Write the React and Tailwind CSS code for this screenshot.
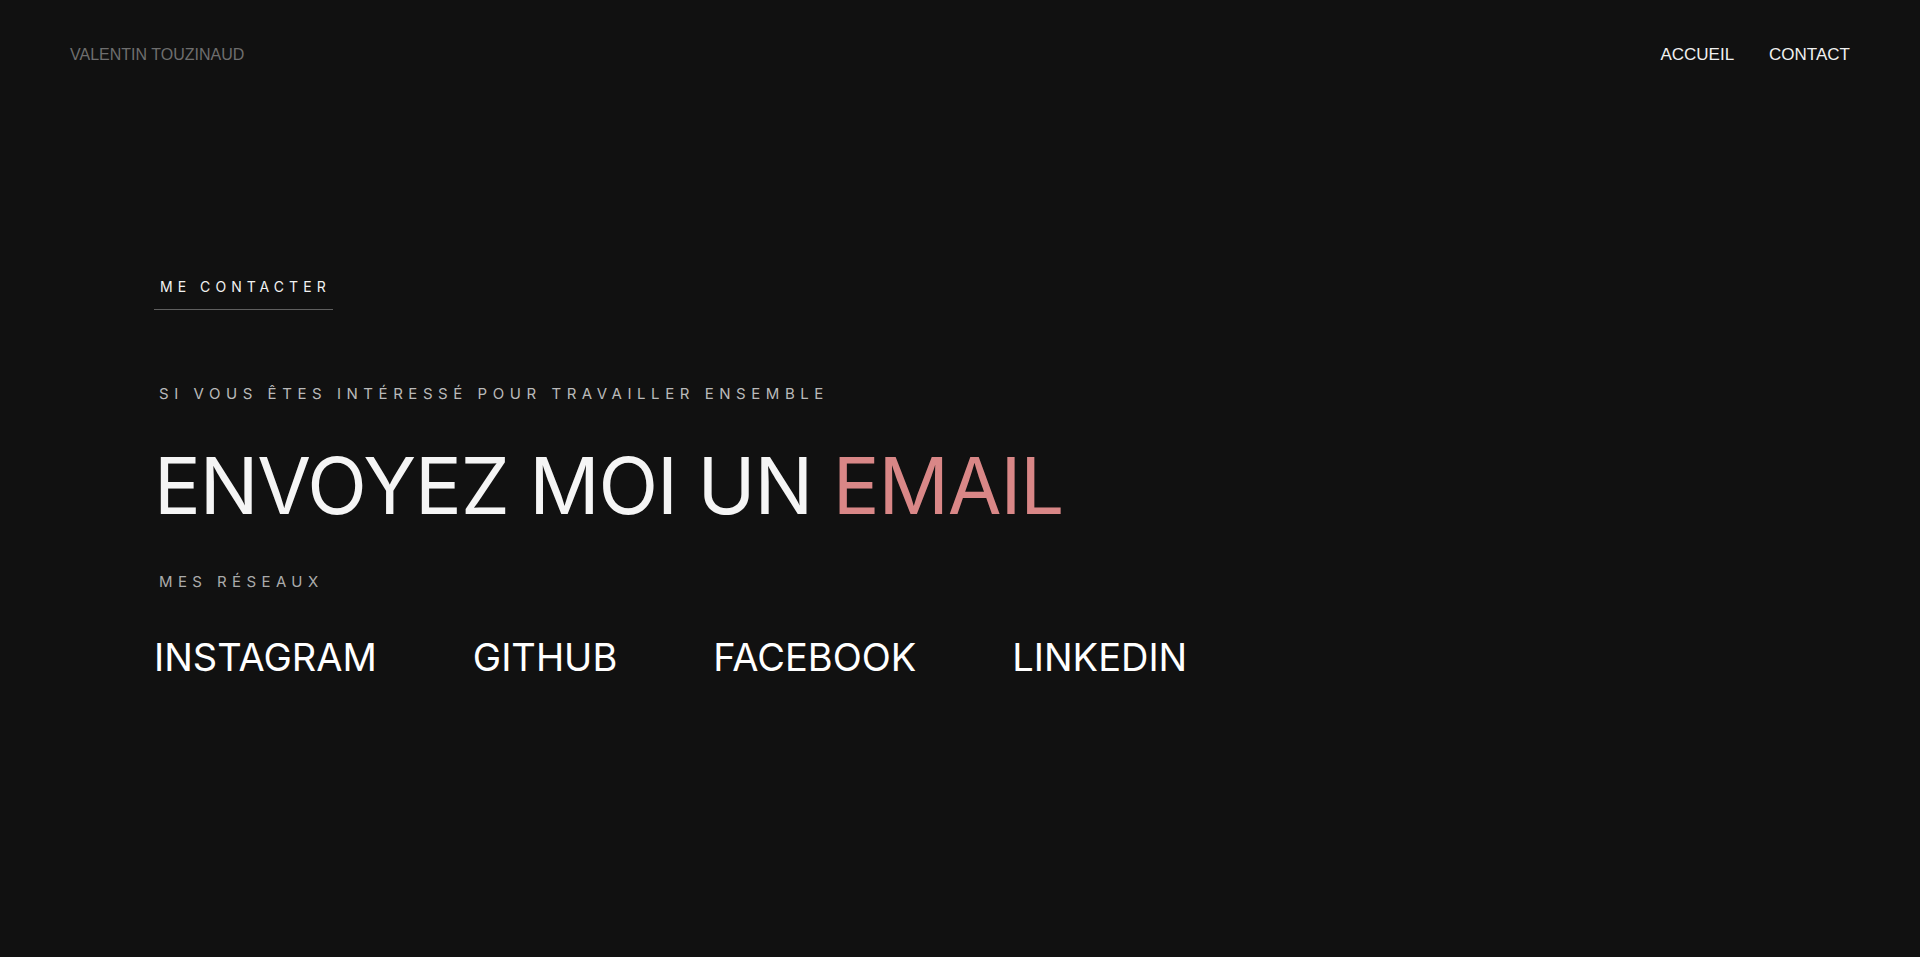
import React from "react";

const socials = ["INSTAGRAM", "GITHUB", "FACEBOOK", "LINKEDIN"];

const App = () => {
  return (
    <div className="min-h-screen w-full bg-[#111111] text-white font-['Inter',sans-serif]">
      <header className="flex items-center justify-between px-[70px] pt-[46px]">
        <a className="text-[16px] leading-[18px] text-[#6e6e6e] font-['Liberation_Sans',Arial,sans-serif]">
          VALENTIN TOUZINAUD
        </a>
        <nav className="flex gap-[35px] text-[17px] leading-[18px] text-[#f0f0f0] font-['Liberation_Sans',Arial,sans-serif]">
          <a>ACCUEIL</a>
          <a>CONTACT</a>
        </nav>
      </header>

      <main className="pl-[154px] pt-[214px]">
        <div className="w-fit border-b border-[#5f5f5f] pl-[6px] pr-[2px] pb-[14px] text-[14px] leading-[17px] tracking-[0.36em] text-[#f2f2f2]">
          ME CONTACTER
        </div>

        <p className="mt-[75px] pl-[5px] text-[15px] leading-[18px] tracking-[0.37em] text-[#bababa]">
          SI VOUS ÊTES INTÉRESSÉ POUR TRAVAILLER ENSEMBLE
        </p>

        <h1 className="mt-[44px] text-[78px] leading-[78px] font-normal tracking-[-0.015em] text-[#f5f5f5]">
          ENVOYEZ MOI UN <span className="text-[#d98787]">EMAIL</span>
        </h1>

        <p className="mt-[48px] pl-[5px] text-[15px] leading-[18px] tracking-[0.36em] text-[#ababab]">
          MES RÉSEAUX
        </p>

        <ul className="mt-[47px] flex gap-[96px]">
          {socials.map((s) => (
            <li key={s}>
              <a className="text-[38px] leading-[38px] text-white">{s}</a>
            </li>
          ))}
        </ul>
      </main>
    </div>
  );
};

export default App;
